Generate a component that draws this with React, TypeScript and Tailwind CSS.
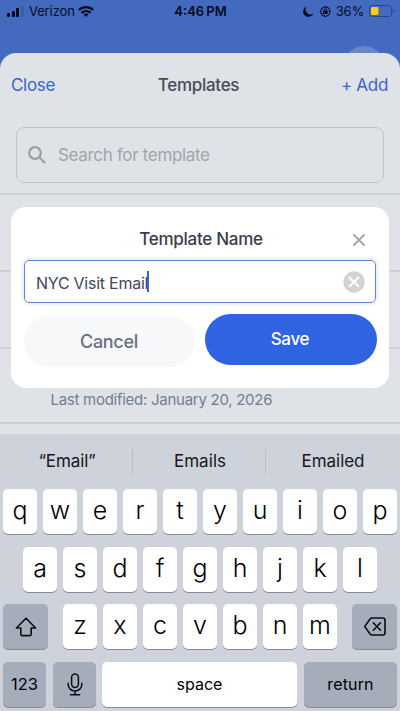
import React from 'react';

function StatusBar() {
  return (
    <div className="relative flex h-[22px] items-center text-[13px] leading-[22px] text-[#060b1c]">
      <div className="flex flex-1 items-center pl-[7px]">
        <div className="mr-[5px] flex h-[11px] items-end gap-[1.4px]">
          <i className="h-[4px] w-[3.2px] rounded-[1px] bg-[#060b1c]" />
          <i className="h-[5.5px] w-[3.2px] rounded-[1px] bg-[#060b1c]" />
          <i className="h-[8.5px] w-[3.2px] rounded-[1px] bg-[#060b1c]" />
          <i className="h-[11px] w-[3.2px] rounded-[1px] bg-[#3b5ba4]" />
        </div>
        <span className="w-[44.5px] whitespace-nowrap text-[13px] tracking-[-0.1px]">Verizon</span>
        <svg className="ml-[5px] h-[11px] w-[16px]" viewBox="0 0 16 11" fill="none" stroke="#060b1c" strokeWidth="2.1">
          <path d="M.8 4.1a10.2 10.2 0 0 1 14.4 0" />
          <path d="M3.4 6.9a6.5 6.5 0 0 1 9.2 0" />
          <path d="M5.6 8.5a3.4 3.4 0 0 1 4.8 0L8 10.9Z" fill="#060b1c" stroke="none" />
        </svg>
      </div>
      <span className="whitespace-nowrap text-[13px] font-semibold tracking-[0px]">4:46&#8201;PM</span>
      <div className="flex flex-1 items-center justify-end pr-[6px]">
        <svg className="mr-[6px] h-[11px] w-[11px]" viewBox="0 0 11 11">
          <path d="M3.6.6A4.9 4.9 0 0 0 10.4 7.5 5.3 5.3 0 1 1 3.6.6Z" fill="#060b1c" />
        </svg>
        <svg className="mr-[4.5px] h-[11px] w-[11px]" viewBox="0 0 11 11" fill="none" stroke="#060b1c">
          <path d="M9.6 3.4A4.7 4.7 0 1 0 10.1 6" strokeWidth="1.1" />
          <path d="M8.2 4.2h2.8L9.8 6.2Z" fill="#060b1c" stroke="none" />
          <rect x="3.2" y="4.7" width="4.4" height="3.4" rx=".5" fill="#060b1c" stroke="none" />
          <path d="M4.2 5V3.9a1.2 1.2 0 0 1 2.4 0V5" strokeWidth=".9" />
        </svg>
        <span className="mr-[5px] whitespace-nowrap text-[13px] tracking-[-0.2px]">36%</span>
        <svg className="h-[12px] w-[25px]" viewBox="0 0 25 12">
          <rect x=".5" y=".5" width="22" height="11" rx="3" fill="none" stroke="#2b457f" />
          <rect x="2" y="2" width="7.4" height="8" rx="1.4" fill="#fdcb10" />
          <path d="M23.8 4v4q1.2-.6 1.2-2t-1.2-2Z" fill="#2b457f" />
        </svg>
      </div>
    </div>
  );
}

const shadow = 'shadow-[0_1px_0_#898b91]';

function Key({ label }: { label: string }) {
  return (
    <div className={`flex h-[45px] w-[34px] justify-center rounded-[5px] bg-white text-[25px] leading-[42px] font-light text-black ${shadow}`}>
      {label}
    </div>
  );
}

function Letters({ keys }: { keys: string }) {
  return (
    <div className="flex gap-[6px]">
      {keys.split('').map((k) => (
        <Key key={k} label={k} />
      ))}
    </div>
  );
}

function Keyboard() {
  return (
    <div className="h-[277px] w-full bg-[#ced2da] text-black">
      <div className="flex h-[55px] items-center text-[17px] text-[#15171c]">
        <span className="w-[132px] pl-[2px] text-center tracking-[-0.1px]">“Email”</span>
        <i className="h-[25px] w-px bg-[#b9bdc6]" />
        <span className="w-[132px] pl-[2px] text-center tracking-[0.05px]">Emails</span>
        <i className="h-[25px] w-px bg-[#b9bdc6]" />
        <span className="w-[134px] text-center tracking-[-0.05px]">Emailed</span>
      </div>
      <div className="flex flex-col items-center gap-[12.6px]">
        <Letters keys="qwertyuiop" />
        <Letters keys="asdfghjkl" />
        <div className="flex w-full justify-between px-[3px]">
          <div className={`flex h-[45px] w-[45px] items-center justify-center rounded-[5px] bg-[#a6adba] ${shadow}`}>
            <svg className="h-[20px] w-[22px]" viewBox="0 0 22 20" fill="none" stroke="#0b0d12" strokeWidth="1.6" strokeLinejoin="round">
              <path d="M11 1.2 20.6 11h-4.4v6.3a1.3 1.3 0 0 1-1.3 1.3H7.1a1.3 1.3 0 0 1-1.3-1.3V11H1.4Z" />
            </svg>
          </div>
          <Letters keys="zxcvbnm" />
          <div className={`flex h-[45px] w-[45px] items-center justify-center rounded-[5px] bg-[#a6adba] ${shadow}`}>
            <svg className="h-[19px] w-[22px]" viewBox="0 0 22 19" fill="none" stroke="#0b0d12" strokeWidth="1.6" strokeLinecap="round" strokeLinejoin="round">
              <path d="M7.8 1h11a2.2 2.2 0 0 1 2.2 2.2v12.6a2.2 2.2 0 0 1-2.2 2.2h-11a2 2 0 0 1-1.5-.7L1.3 10.4a1.4 1.4 0 0 1 0-1.8L6.3 1.7A2 2 0 0 1 7.8 1Z" />
              <path d="m9.3 5.8 7.2 7.4M16.5 5.8l-7.2 7.4" />
            </svg>
          </div>
        </div>
        <div className="flex w-full px-[3px]">
          <div className={`flex h-[45px] w-[43px] items-center justify-center rounded-[5px] bg-[#a6adba] text-[16.5px] ${shadow}`}>123</div>
          <div className={`ml-[7px] flex h-[45px] w-[43px] items-center justify-center rounded-[5px] bg-[#a6adba] ${shadow}`}>
            <svg className="h-[23px] w-[16px]" viewBox="0 0 16 23" fill="none" stroke="#0b0d12" strokeWidth="1.5" strokeLinecap="round">
              <rect x="4.6" y="1" width="6.8" height="13.5" rx="3.4" />
              <path d="M1.2 10.2v1.3a6.8 6.5 0 0 0 13.6 0v-1.3M8 18v3.8M3.4 21.8h9.2" />
            </svg>
          </div>
          <div className={`ml-[6px] flex h-[45px] w-[195px] items-center justify-center rounded-[5px] bg-white text-[16px] tracking-[0px] ${shadow}`}>space</div>
          <div className={`ml-[7px] flex h-[45px] w-[93px] items-center justify-center rounded-[5px] bg-[#a6adba] text-[16px] tracking-[0.15px] ${shadow}`}>return</div>
        </div>
      </div>
    </div>
  );
}

function TemplateDialog() {
  return (
    <div className="absolute top-[207px] left-[10.5px] h-[181px] w-[378.5px] rounded-[15px] bg-white px-[13px] pt-[22px]">
      <div className="flex h-[22px] items-center">
        <h2 className="flex-1 pl-[26px] text-center text-[17px] font-medium tracking-[-0.27px] text-[#3a3e4c]">Template Name</h2>
        <svg className="mr-[11.5px] mb-[1px] h-[12px] w-[12px]" viewBox="0 0 12 12" stroke="#a7a8aa" strokeWidth="2" strokeLinecap="round">
          <path d="m1 1 10 10M11 1 1 11" />
        </svg>
      </div>
      <div className="mt-[9px] flex h-[43px] items-center rounded-[5px] border border-[#6683da] pr-[10.5px] pl-[11.5px] shadow-[0_0_5px_#ccd9fa]">
        <span className="pt-[2px] text-[16px] tracking-[-0.25px] text-[#43475a]">NYC Visit Email</span>
        <i className="-ml-[1px] h-[21px] w-[2px] bg-[#3662df]" />
        <svg className="ml-auto h-[22px] w-[22px]" viewBox="0 0 22 22">
          <circle cx="11" cy="11" r="10.7" fill="#d3d3d4" />
          <path d="m6.7 6.7 8.6 8.6M15.3 6.7l-8.6 8.6" stroke="#fff" strokeWidth="2.2" strokeLinecap="round" />
        </svg>
      </div>
      <div className="mt-[10.5px] flex justify-between font-medium">
        <button className="mt-[2px] h-[51px] w-[171px] rounded-full bg-[#f6f8fa] text-[18px] tracking-[-0.3px] text-[#647083]">Cancel</button>
        <button className="mr-[-1px] h-[51px] w-[172px] rounded-full bg-[#2f63e2] pt-[2px] pr-[2px] text-[17px] tracking-[-0.3px] text-white">Save</button>
      </div>
    </div>
  );
}

export default function App() {
  return (
    <div className="relative flex h-[711px] w-[400px] flex-col overflow-hidden bg-[#446ac0] font-['Inter','Liberation_Sans',sans-serif]">
      <StatusBar />
      <div className="absolute top-[46px] left-[343px] h-[42px] w-[42px] rounded-full bg-[#6b86c5]" />
      <main className="relative mt-[31px] flex flex-1 flex-col rounded-t-[16px] bg-[#dfe2e7]">
        <header className="flex h-[65px] items-center pt-[1px] pr-[12px] pl-[11px] text-[17px] tracking-[-0.3px] text-[#3c62cd]">
          <span className="flex-1">Close</span>
          <h1 className="pr-[2px] font-medium text-[#484c58]">Templates</h1>
          <span className="flex-1 text-right">+ Add</span>
        </header>
        <div className="mx-[16px] mt-[9px] flex h-[56px] items-center rounded-[8px] border border-[#c2c5ca] pl-[10.5px]">
          <svg className="mr-[12.5px] h-[18px] w-[18px]" viewBox="0 0 18 18" fill="none" stroke="#9b9fa5" strokeWidth="2.2">
            <circle cx="7" cy="7" r="5.8" />
            <path d="m11.2 11.2 5.8 5.8" />
          </svg>
          <span className="pt-[2px] text-[17px] tracking-[-0.33px] text-[#a1a5ac]">Search for template</span>
        </div>
        <div className="mt-[10px] h-[2px] bg-[#cdd0d5]" />
        <div className="h-[77px] border-b-2 border-[#cdd0d5]" />
        <div className="h-[77px] border-b-2 border-[#cdd0d5]" />
        <div className="flex h-[74.5px] items-end border-b-2 border-[#cdd0d5] pb-[11px] pl-[50.5px] text-[15px] leading-[22px] tracking-[-0.27px] text-[#747e8d]">
          Last modified: January 20, 2026
        </div>
      </main>
      <Keyboard />
      <TemplateDialog />
    </div>
  );
}
